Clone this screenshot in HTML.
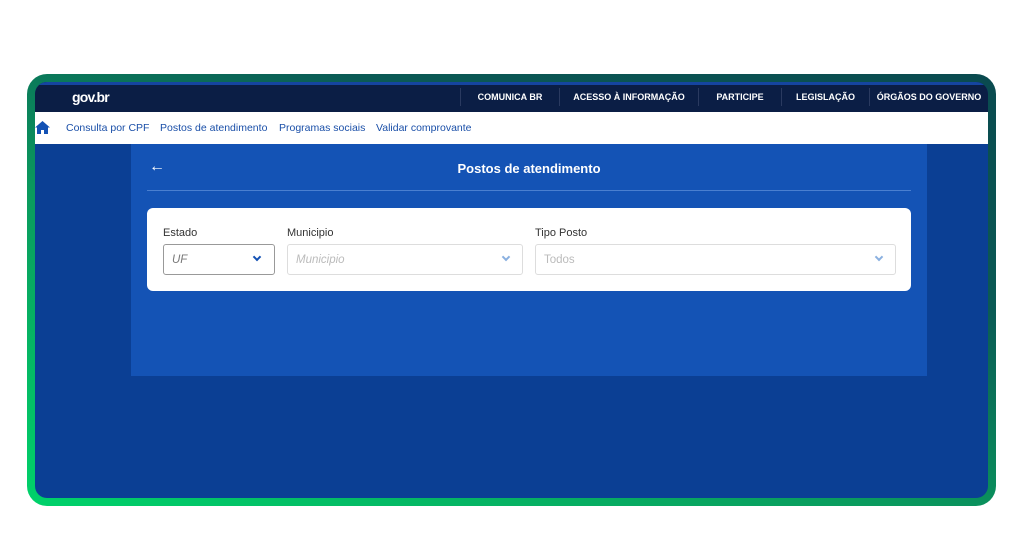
<!DOCTYPE html>
<html><head><meta charset="utf-8"><style>
*{margin:0;padding:0;box-sizing:border-box}
body{width:1024px;height:536px;background:#fff;position:relative;overflow:hidden;font-family:"Liberation Sans",sans-serif}
.frame{position:absolute;left:27px;top:74px;width:969px;height:432px;border-radius:20px;background:linear-gradient(20deg,#00d26a 0%,#0a9a5e 40%,#0b5a55 70%,#0a4a4f 100%)}
.screen{position:absolute;left:35px;top:82px;width:953px;height:416px;border-radius:12px;background:#0b3f94;overflow:hidden}
.top{position:absolute;left:0;top:0;width:100%;height:30px;background:#0b1e45;border-top:3px solid #1545a0}
.logo{position:absolute;left:37px;top:4px;color:#fff;font-weight:bold;font-size:14px;letter-spacing:-0.8px}
.menu span{position:absolute;top:3px;color:#fff;font-weight:bold;font-size:9px;border-left:1px solid #2a3a60;height:18px;line-height:18px;text-align:center;white-space:nowrap}
.nav{position:absolute;left:0;top:30px;width:100%;height:32px;background:#fff}
.nav a{position:absolute;top:10px;font-size:10.5px;color:#1a4fa8}
.panel{position:absolute;left:96px;top:62px;width:796px;height:232px;background:#1453b5}
.title{position:absolute;left:0;top:17px;width:100%;text-align:center;color:#fff;font-weight:bold;font-size:13px}
.arrow{position:absolute;left:18px;top:14px;color:#fff;font-size:16px;font-weight:bold}
.line{position:absolute;left:16px;top:46px;width:764px;height:1px;background:#4a7fd0}
.card{position:absolute;left:16px;top:64px;width:764px;height:83px;background:#fff;border-radius:6px}
.lbl{position:absolute;top:19px;font-size:11px;color:#333}
.sel{position:absolute;top:36px;height:31px;border:1px solid #ddd;border-radius:3px;font-style:italic;font-size:11.5px;color:#bbb;padding:9px 8px}
.chev{position:absolute;right:13px;top:9px;width:6px;height:6px;border-right:2px solid #8ab0e0;border-bottom:2px solid #8ab0e0;transform:rotate(45deg)}
</style></head><body>
<div class="frame"></div>
<div class="screen">
 <div class="top"><div class="logo">gov.br</div>
  <div class="menu"><span style="left:425px;width:99px">COMUNICA BR</span><span style="left:524px;width:139px">ACESSO À INFORMAÇÃO</span><span style="left:663px;width:83px">PARTICIPE</span><span style="left:746px;width:88px">LEGISLAÇÃO</span><span style="left:834px;width:119px">ÓRGÃOS DO GOVERNO</span></div></div>
 <div class="nav">
  <svg style="position:absolute;left:0;top:9px" width="15" height="13" viewBox="0 0 15 13"><path d="M7.5 0L0 6.5h2V13h4V9h3v4h4V6.5h2z" fill="#1351b4"/></svg>
  <a style="left:31px">Consulta por CPF</a><a style="left:125px">Postos de atendimento</a><a style="left:244px">Programas sociais</a><a style="left:341px">Validar comprovante</a>
 </div>
 <div class="panel">
  <div class="arrow">←</div>
  <div class="title">Postos de atendimento</div>
  <div class="line"></div>
  <div class="card">
   <div class="lbl" style="left:16px">Estado</div>
   <div class="sel" style="left:16px;width:112px;border-color:#999;color:#777">UF<div class="chev" style="border-color:#1351b4;right:14px"></div></div>
   <div class="lbl" style="left:140px">Municipio</div>
   <div class="sel" style="left:140px;width:236px">Municipio<div class="chev"></div></div>
   <div class="lbl" style="left:388px">Tipo Posto</div>
   <div class="sel" style="left:388px;width:361px;font-style:normal">Todos<div class="chev"></div></div>
  </div>
 </div>
</div>
</body></html>
